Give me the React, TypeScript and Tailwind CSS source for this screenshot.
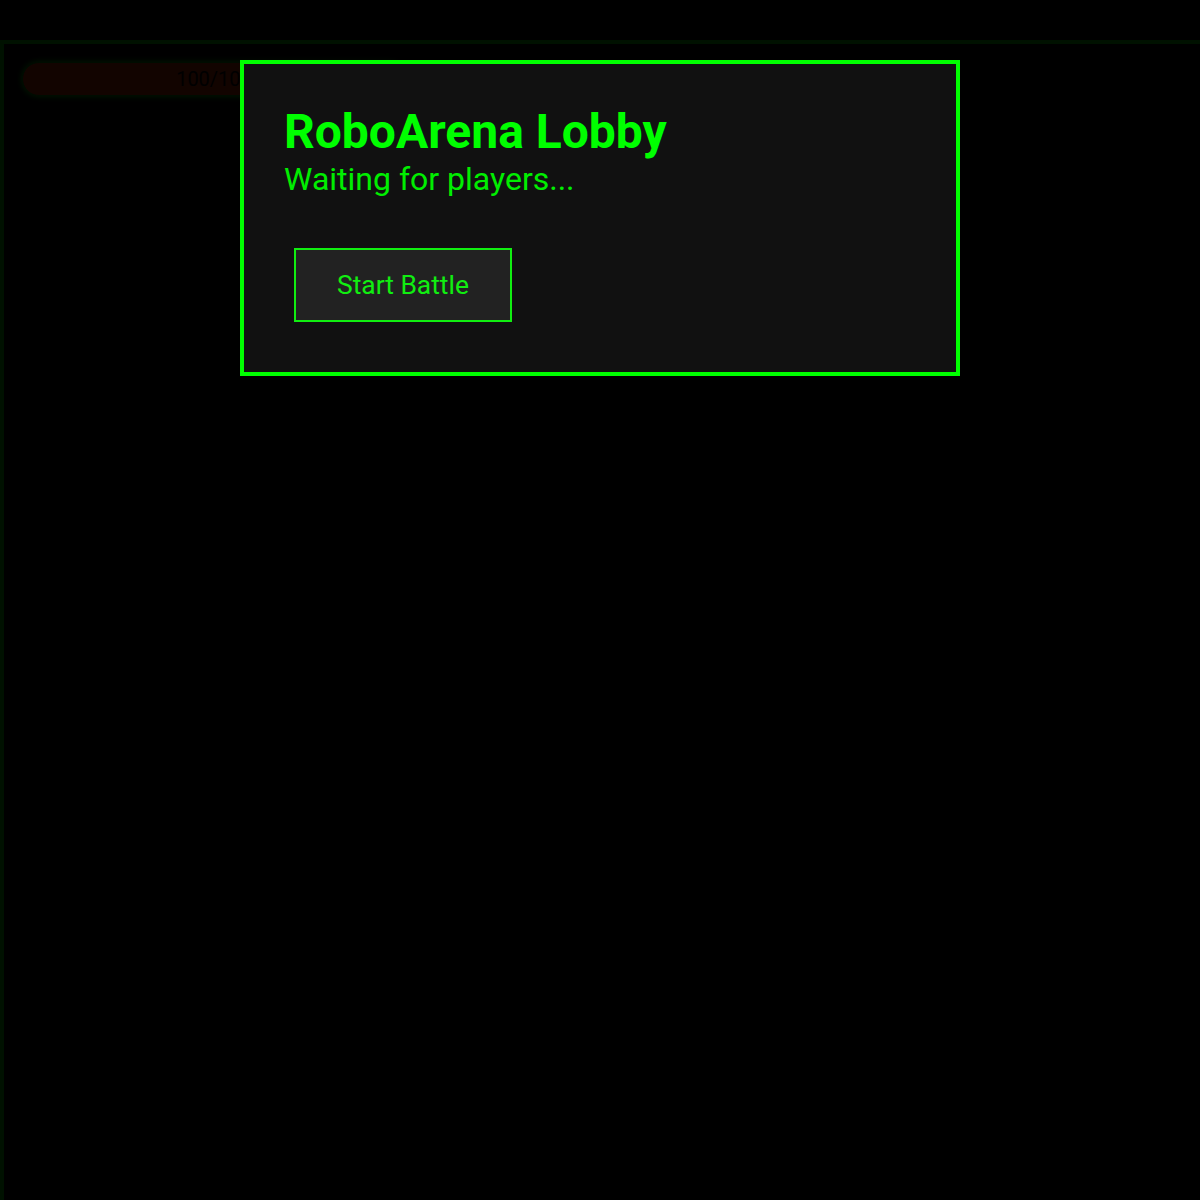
import React from "react";

export default function App() {
  return (
    <div
      className="relative w-[1200px] h-[1200px] overflow-hidden bg-black"
      style={{ fontFamily: "Roboto, 'Liberation Sans', sans-serif" }}
    >
      {/* dimmed game layer */}
      <div className="pt-[40px]">
        <div className="w-[1220px] h-[1200px] border-4 border-[#001100] bg-black px-[18px] pt-[18px]">
          <div className="w-[384px] h-[34px] rounded-full bg-[#120400] border border-[#000c00] shadow-[0_0_6px_#001a00] flex items-center justify-center">
            <span className="text-[20px] text-[#000000]">100/100</span>
          </div>
        </div>
      </div>

      {/* lobby modal */}
      <div className="absolute left-[240px] top-[60px] w-[720px] border-4 border-[#00ff00] bg-[#111111] p-[40px]">
        <h1 className="text-[48px] font-bold leading-[56px] text-[#00ff00]">RoboArena Lobby</h1>
        <p className="text-[32px] leading-[38px] text-[#00ee00]">Waiting for players...</p>
        <button className="mt-[50px] ml-[10px] mb-[10px] border-2 border-[#11ee11] bg-[#222222] px-[41px] py-[20px] text-[26.4px] leading-[30px] text-[#11ee11]">
          Start Battle
        </button>
      </div>
    </div>
  );
}
